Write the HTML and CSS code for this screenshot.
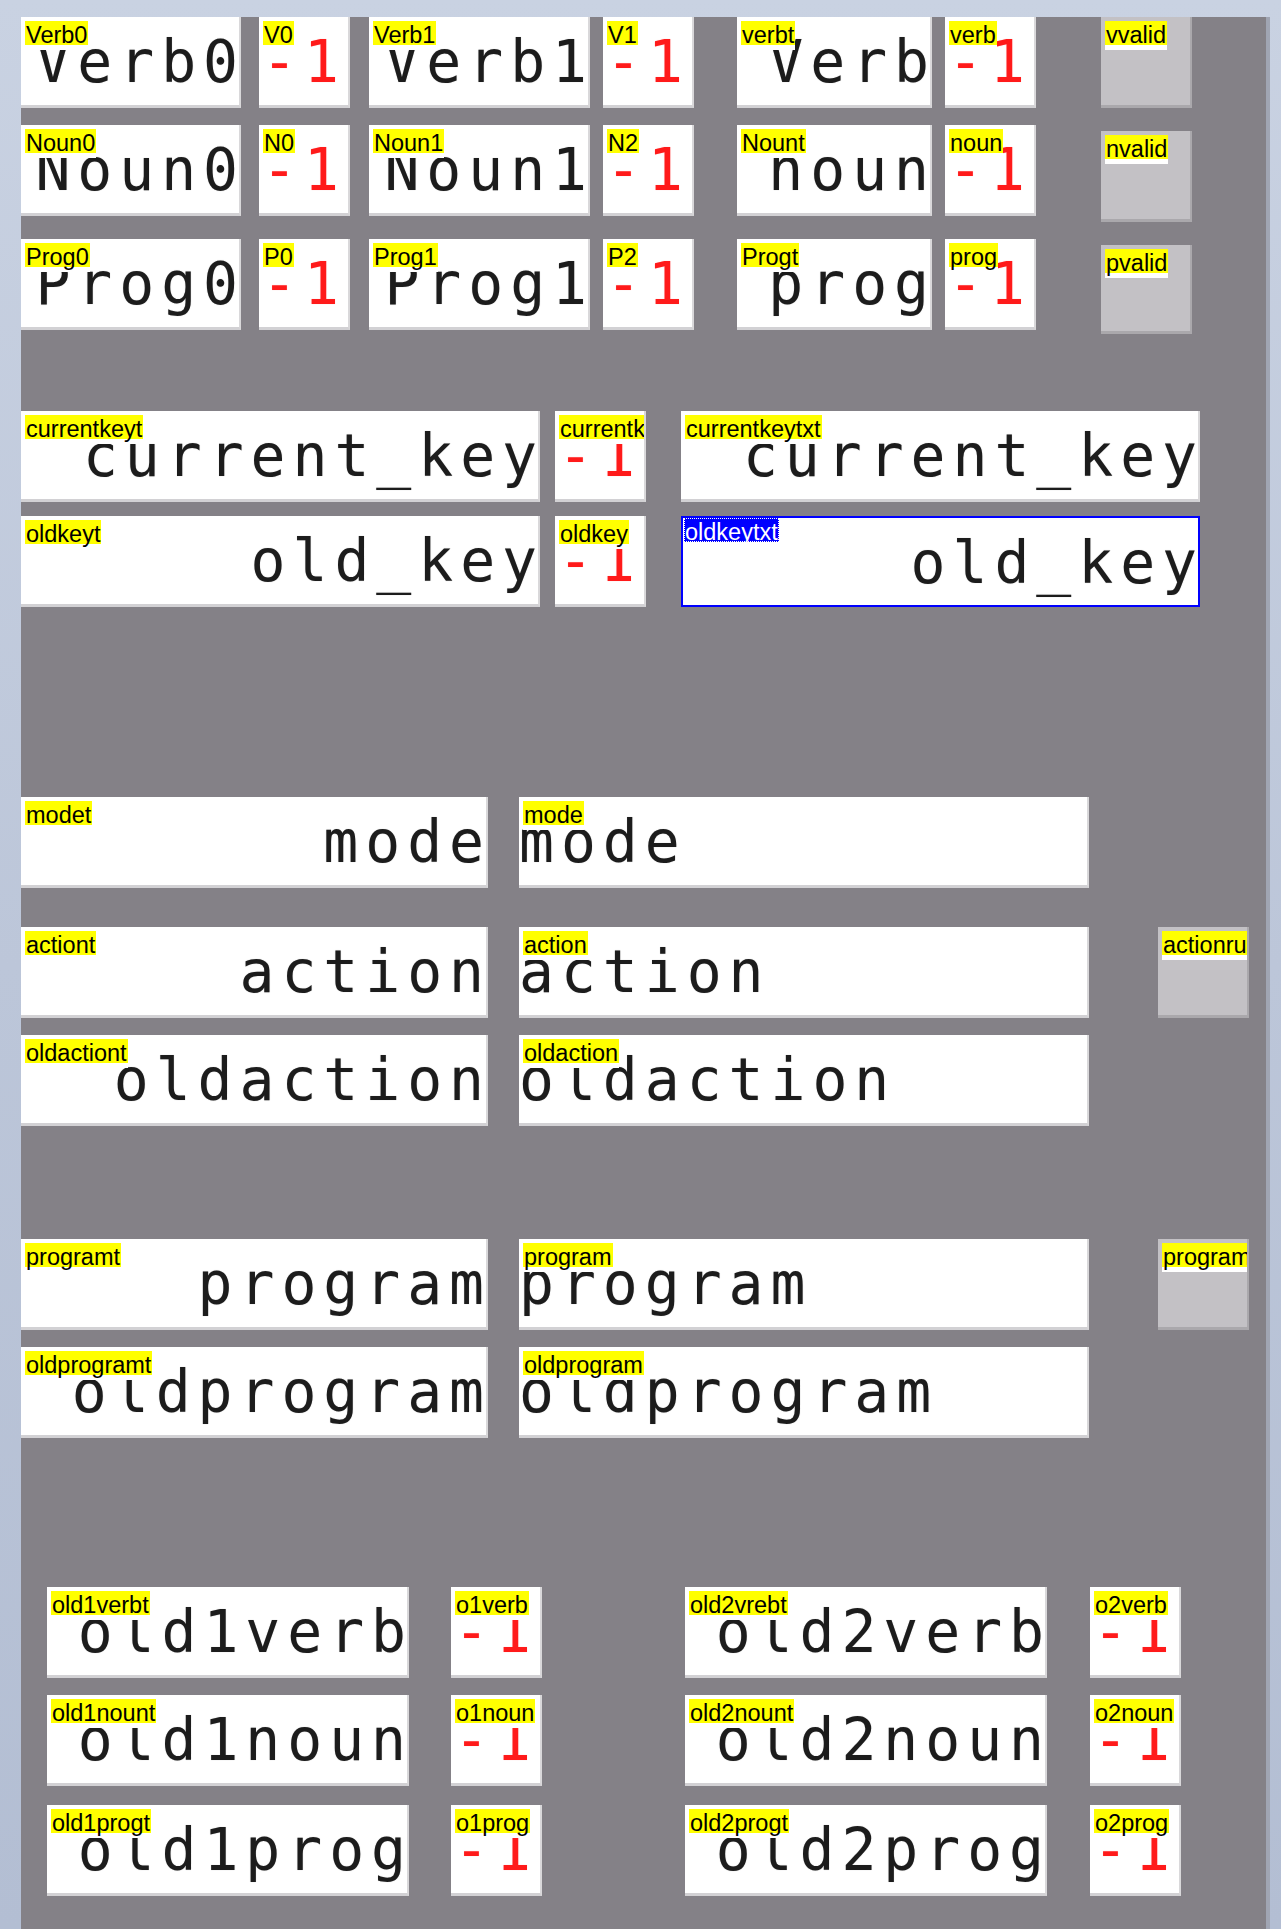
FILE: index.html
```html
<!DOCTYPE html>
<html lang="en">
<head>
<meta charset="UTF-8" />
<title>Parser state</title>
<link rel="stylesheet" href="styles.css">
</head>
<body>
  <div class="window">
    <div class="panel">

      <div class="row">
        <div class="box wide"><span class="tag">Verb0</span><span class="val">Verb0</span></div>
        <div class="box num gap-a"><span class="tag">V0</span><span class="val neg">-1</span></div>
        <div class="box wide wide-b gap-b"><span class="tag">Verb1</span><span class="val">Verb1</span></div>
        <div class="box num gap-c"><span class="tag">V1</span><span class="val neg">-1</span></div>
        <div class="box mid gap-d"><span class="tag">verbt</span><span class="val">Verb</span></div>
        <div class="box num gap-c"><span class="tag">verb</span><span class="val neg">-1</span></div>
        <div class="box flag gap-e"><span class="tag">vvalid</span></div>
      </div>

      <div class="row row-2">
        <div class="box wide"><span class="tag">Noun0</span><span class="val">Noun0</span></div>
        <div class="box num gap-a"><span class="tag">N0</span><span class="val neg">-1</span></div>
        <div class="box wide wide-b gap-b"><span class="tag">Noun1</span><span class="val">Noun1</span></div>
        <div class="box num gap-c"><span class="tag">N2</span><span class="val neg">-1</span></div>
        <div class="box mid gap-d"><span class="tag">Nount</span><span class="val">noun</span></div>
        <div class="box num gap-c"><span class="tag">noun</span><span class="val neg">-1</span></div>
        <div class="box flag gap-e drop"><span class="tag">nvalid</span></div>
      </div>

      <div class="row row-3">
        <div class="box wide"><span class="tag">Prog0</span><span class="val">Prog0</span></div>
        <div class="box num gap-a"><span class="tag">P0</span><span class="val neg">-1</span></div>
        <div class="box wide wide-b gap-b"><span class="tag">Prog1</span><span class="val">Prog1</span></div>
        <div class="box num gap-c"><span class="tag">P2</span><span class="val neg">-1</span></div>
        <div class="box mid gap-d"><span class="tag">Progt</span><span class="val">prog</span></div>
        <div class="box num gap-c"><span class="tag">prog</span><span class="val neg">-1</span></div>
        <div class="box flag gap-e drop short"><span class="tag">pvalid</span></div>
      </div>

      <!-- keys -->
      <div class="row key-1">
        <div class="box key"><span class="tag">currentkeyt</span><span class="val">current_key</span></div>
        <div class="box num key-gap"><span class="tag">currentk</span><span class="val neg">-1</span></div>
        <div class="box key key-txt"><span class="tag">currentkeytxt</span><span class="val">current_key</span></div>
      </div>
      <div class="row key-2">
        <div class="box key"><span class="tag">oldkeyt</span><span class="val">old_key</span></div>
        <div class="box num key-gap"><span class="tag">oldkey</span><span class="val neg">-1</span></div>
        <div class="box key key-txt sel"><span class="tag">oldkeytxt</span><span class="val">old_key</span></div>
      </div>

      <!-- mode / action -->
      <div class="row mode-1">
        <div class="box label-box"><span class="tag">modet</span><span class="val">mode</span></div>
        <div class="box value-box"><span class="tag">mode</span><span class="val">mode</span></div>
      </div>
      <div class="row mode-2">
        <div class="box label-box"><span class="tag">actiont</span><span class="val">action</span></div>
        <div class="box value-box"><span class="tag">action</span><span class="val">action</span></div>
        <div class="box flag run"><span class="tag">actionru</span></div>
      </div>
      <div class="row tight">
        <div class="box label-box"><span class="tag">oldactiont</span><span class="val">oldaction</span></div>
        <div class="box value-box"><span class="tag">oldaction</span><span class="val">oldaction</span></div>
      </div>

      <!-- program -->
      <div class="row prog-1">
        <div class="box label-box"><span class="tag">programt</span><span class="val">program</span></div>
        <div class="box value-box"><span class="tag">program</span><span class="val">program</span></div>
        <div class="box flag run"><span class="tag">program</span></div>
      </div>
      <div class="row tight">
        <div class="box label-box"><span class="tag">oldprogramt</span><span class="val">oldprogram</span></div>
        <div class="box value-box"><span class="tag">oldprogram</span><span class="val">oldprogram</span></div>
      </div>

      <!-- history -->
      <div class="row hist-1">
        <div class="box hist"><span class="tag">old1verbt</span><span class="val">old1verb</span></div>
        <div class="box num hist-num"><span class="tag">o1verb</span><span class="val neg">-1</span></div>
        <div class="box hist hist-two"><span class="tag">old2vrebt</span><span class="val">old2verb</span></div>
        <div class="box num hist-num2"><span class="tag">o2verb</span><span class="val neg">-1</span></div>
      </div>
      <div class="row tight">
        <div class="box hist"><span class="tag">old1nount</span><span class="val">old1noun</span></div>
        <div class="box num hist-num"><span class="tag">o1noun</span><span class="val neg">-1</span></div>
        <div class="box hist hist-two"><span class="tag">old2nount</span><span class="val">old2noun</span></div>
        <div class="box num hist-num2"><span class="tag">o2noun</span><span class="val neg">-1</span></div>
      </div>
      <div class="row hist-3">
        <div class="box hist"><span class="tag">old1progt</span><span class="val">old1prog</span></div>
        <div class="box num hist-num"><span class="tag">o1prog</span><span class="val neg">-1</span></div>
        <div class="box hist hist-two"><span class="tag">old2progt</span><span class="val">old2prog</span></div>
        <div class="box num hist-num2"><span class="tag">o2prog</span><span class="val neg">-1</span></div>
      </div>

    </div>
  </div>
</body>
</html>
```

FILE: styles.css
```css
body {
  margin: 0;
  min-height: 1929px;
  background: linear-gradient(180deg, #c9d2e2 0%, #bcc6d9 50%, #b3bed3 100%);
  font-family: 'Liberation Sans', Arial, sans-serif;
}
.window {
  padding: 17px 0 0 21px;
}
.panel {
  width: 1245px;
  min-height: 1912px;
  background: #848187;
  border-right: 4px solid #a0a5b3;
}
.row {
  display: flex;
  height: 91px;
}
.row-2 { margin-top: 17px; }
.row-3 { margin-top: 23px; }
.key-1 { margin-top: 81px; }
.key-2 { margin-top: 14px; }
.mode-1 { margin-top: 190px; }
.mode-2 { margin-top: 39px; }
.prog-1 { margin-top: 113px; }
.hist-1 { margin-top: 149px; }
.hist-3 { margin-top: 19px; }
.tight { margin-top: 17px; }

.box {
  position: relative;
  box-sizing: border-box;
  height: 91px;
  flex: none;
  background: #fff;
  border-right: 2px solid #d9d8da;
  border-bottom: 3px solid #d2d1d4;
  overflow: hidden;
  display: flex;
  justify-content: flex-end;
  padding-right: 1px;
}
.val {
  font-family: 'DejaVu Sans Mono', monospace;
  font-size: 58px;
  line-height: 68px;
  letter-spacing: 7px;
  margin-right: -7px;
  padding-top: 11px;
  color: #1c1c1c;
  text-shadow: 0 0 1px rgba(0,0,0,0.3);
  white-space: nowrap;
}
.neg {
  color: #ff1a1a;
  text-shadow: 0 0 1px rgba(255,0,0,0.3);
}
.tag {
  position: absolute;
  top: 4px;
  left: 4px;
  z-index: 1;
  height: 29px;
  padding: 0 1px;
  font-size: 23.5px;
  line-height: 28px;
  color: #000;
  background: linear-gradient(180deg, #ffff00 0, #ffff00 24px, #fff 24px);
  white-space: nowrap;
}

/* top grid */
.wide { width: 220px; }
.wide-b { width: 221px; }
.num {
  width: 91px;
  justify-content: flex-start;
  padding-right: 0;
  padding-left: 3px;
}
.mid { width: 195px; }
.gap-a { margin-left: 18px; }
.gap-b { margin-left: 19px; }
.gap-c { margin-left: 13px; }
.gap-d { margin-left: 43px; }
.gap-e { margin-left: 65px; }

.flag {
  width: 91px;
  background: #c3c1c5;
  border-right-color: #aaa8ac;
  border-bottom-color: #aaa8ac;
}
.drop {
  margin-top: 6px;
}
.short {
  height: 89px;
}

/* keys */
.key { width: 519px; }
.key-gap { margin-left: 15px; }
.key-txt { margin-left: 35px; }
.sel {
  border: 2px solid #0000ff;
}
.sel .tag {
  top: 0;
  left: 1px;
  height: 24px;
  background: #0000ff;
  color: #fff;
  outline: 1px dotted #fff;
  outline-offset: -1px;
}

/* mode, action, program */
.label-box {
  width: 467px;
  padding-right: 2px;
}
.value-box {
  width: 570px;
  margin-left: 31px;
  justify-content: flex-start;
}
.run { margin-left: 69px; }

/* history */
.hist {
  width: 362px;
  margin-left: 26px;
}
.hist-num { margin-left: 42px; }
.hist-two { margin-left: 143px; }
.hist-num2 { margin-left: 43px; }
```
